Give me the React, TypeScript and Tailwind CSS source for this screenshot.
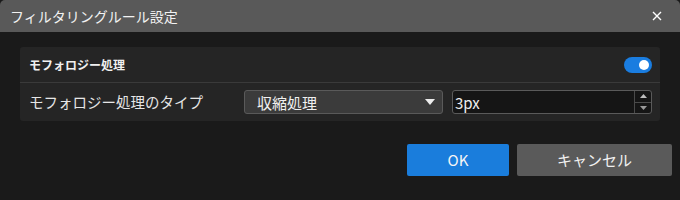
export default function App() {
  const font = { fontFamily: '"Noto Sans CJK JP", "Noto Sans", sans-serif' };

  return (
    <div className="w-[680px] h-[200px] bg-[#1a1a1a] flex flex-col" style={font}>
      {/* Title bar */}
      <header className="h-[32px] bg-[#595959] rounded-t-[5px] flex items-center justify-between pl-[10px] pr-[18px] flex-shrink-0">
        <h1 className="text-[14px] text-[#f2f2f2] leading-none">フィルタリングルール設定</h1>
        <svg width="10" height="10" viewBox="0 0 10 10" aria-hidden="true">
          <path d="M1 1L9 9M9 1L1 9" stroke="#ffffff" strokeWidth="1.4" />
        </svg>
      </header>

      {/* Body */}
      <div className="px-[20px] pt-[15px]">
        <div className="bg-[#252525] rounded-[3px]">
          {/* Section header */}
          <div className="h-[36px] flex items-center justify-between pl-[9px] pr-[8px] border-b border-[#3a3a3a]">
            <span className="text-[12px] font-bold text-[#f0f0f0] leading-none">モフォロジー処理</span>
            <div className="w-[28px] h-[16px] rounded-full bg-[#1a7de0] flex items-center justify-end pr-[3px]">
              <div className="w-[10px] h-[10px] rounded-full bg-white" />
            </div>
          </div>

          {/* Type row */}
          <div className="h-[38px] flex items-center pl-[9px] pr-[8px]">
            <span className="w-[215px] text-[14.5px] text-[#e6e6e6] leading-none">モフォロジー処理のタイプ</span>
            <div className="w-[199px] h-[24px] bg-[#3b3b3b] border border-[#5a5a5a] rounded-[3px] flex items-center justify-between pl-[12px] pr-[7px]">
              <span className="text-[15px] text-[#f0f0f0] leading-none">収縮処理</span>
              <svg width="10" height="6" viewBox="0 0 10 6" aria-hidden="true">
                <path d="M0 0H10L5 6Z" fill="#ececec" />
              </svg>
            </div>
            <div className="ml-[9px] w-[200px] h-[24px] bg-[#151515] border border-[#5a5a5a] rounded-[3px] flex">
              <span className="flex-1 flex items-center pl-[2px] text-[15px] text-[#f0f0f0] leading-none">3px</span>
              <div className="w-[17px] border-l border-[#4a4a4a] flex flex-col">
                <div className="flex-1 flex items-center justify-center border-b border-[#4a4a4a]">
                  <svg width="7" height="4" viewBox="0 0 7 4" aria-hidden="true">
                    <path d="M0 4H7L3.5 0Z" fill="#bdbdbd" />
                  </svg>
                </div>
                <div className="flex-1 flex items-center justify-center">
                  <svg width="7" height="4" viewBox="0 0 7 4" aria-hidden="true">
                    <path d="M0 0H7L3.5 4Z" fill="#9a9a9a" />
                  </svg>
                </div>
              </div>
            </div>
          </div>
        </div>

        {/* Buttons */}
        <div className="flex justify-end gap-[8px] pt-[23px] -mr-[12px]">
          <button className="w-[102px] h-[32px] bg-[#1a7ddc] rounded-[2px] text-[15px] text-[#f5f5f5]">OK</button>
          <button className="w-[155px] h-[32px] bg-[#5a5a5a] rounded-[2px] text-[15px] text-[#f0f0f0]">キャンセル</button>
        </div>
      </div>
    </div>
  );
}
